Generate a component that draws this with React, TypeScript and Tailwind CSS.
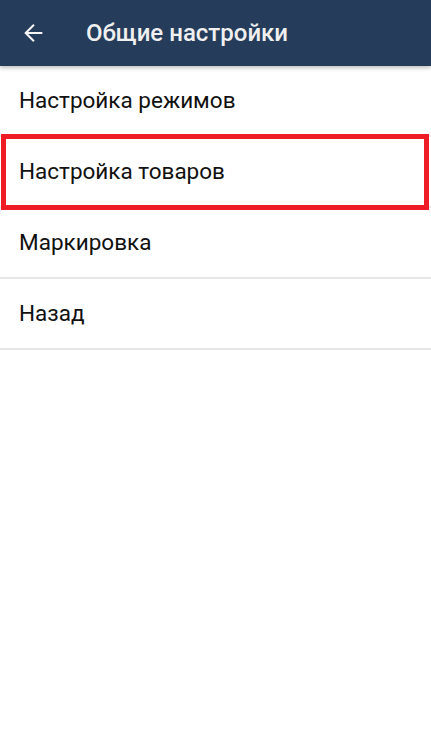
const items = ["Настройка режимов", "Настройка товаров", "Маркировка", "Назад"];

const App = () => {
    return (
        <div className="min-h-screen bg-white font-['Roboto',sans-serif]">
            <div className="relative z-10 flex h-[66px] items-center bg-[#253d5b] shadow-[0_2px_4px_rgba(0,0,0,0.25)]">
                <div className="flex w-[86px] pl-[19px]">
                    <svg width="28" height="28" viewBox="0 0 24 24" fill="#f5f5f5">
                        <path d="M20 11.1H7.83l5.59-5.59L12.2 4.3 4.5 12l7.7 7.7 1.22-1.21-5.59-5.59H20v-1.8z" />
                    </svg>
                </div>
                <h1 className="text-[24px] font-medium text-[#f0f0f0]">Общие настройки</h1>
            </div>
            <div className="flex flex-col">
                {items.map((item, index) => (
                    <div key={index} className="h-[71px] border-b-2 border-[#e6e6e6] relative">
                        <div className={"flex h-full items-center pl-[19px] text-[22.5px] text-[#111111]"}>
                            {item}
                        </div>
                        {index === 1 && (
                            <div className="absolute left-[1px] right-[2px] top-[-3px] h-[76px] border-[5px] border-[#ee1c25]" />
                        )}
                    </div>
                ))}
            </div>
        </div>
    );
};

export default App;
